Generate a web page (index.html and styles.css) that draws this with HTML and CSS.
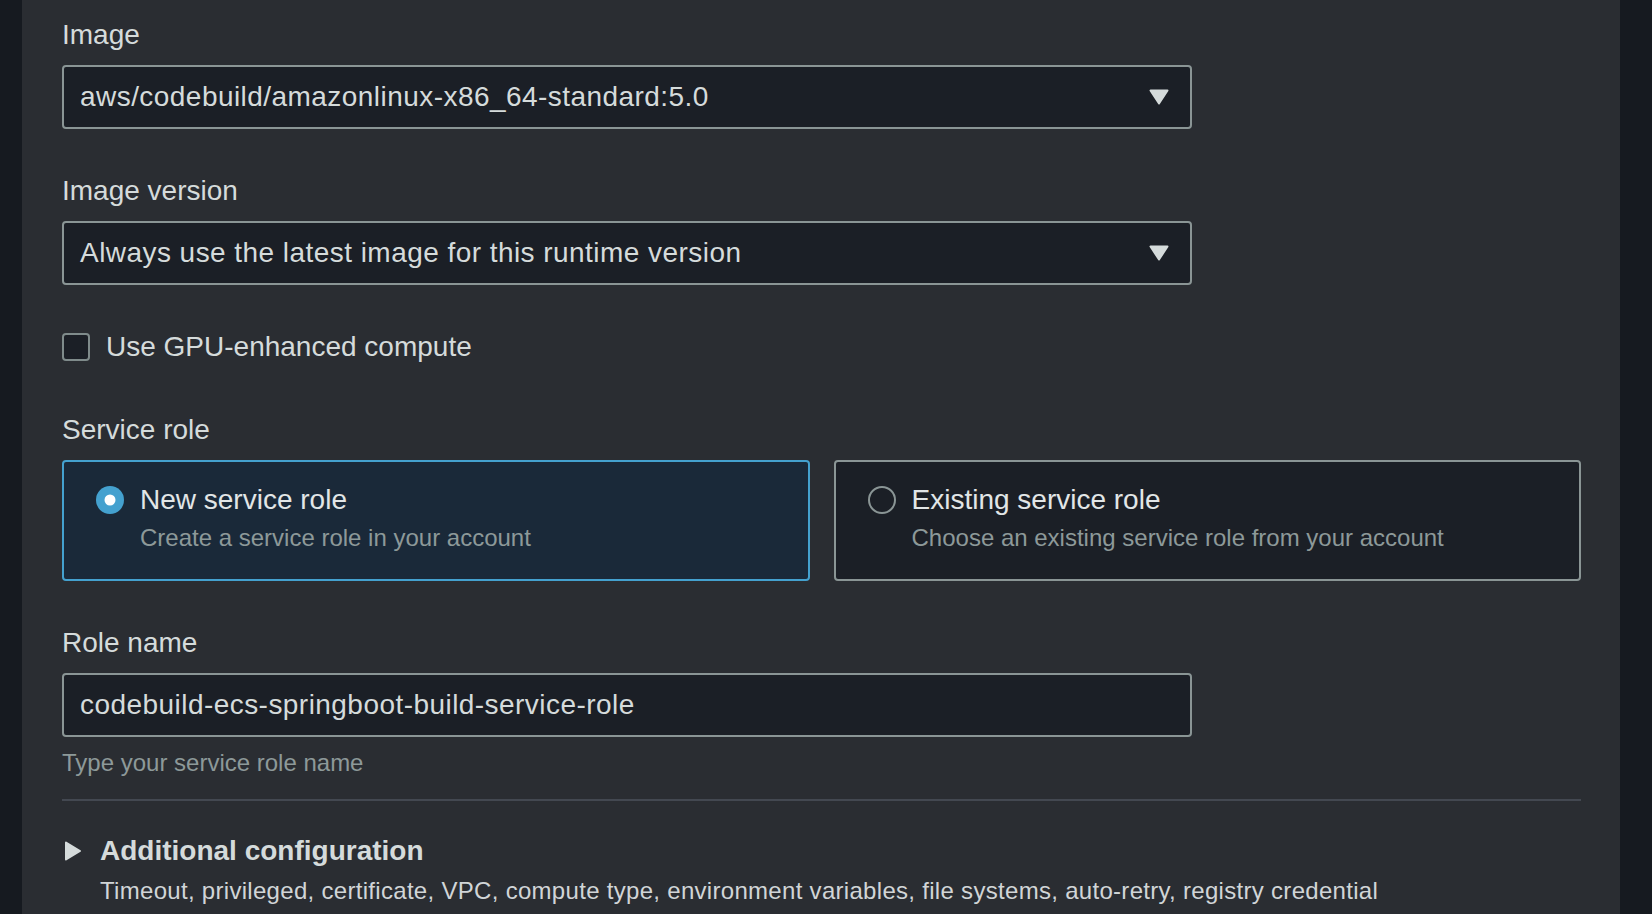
FILE: index.html
```html
<!DOCTYPE html>
<html lang="en">
<head>
<meta charset="utf-8">
<title>Environment</title>
<link rel="stylesheet" href="styles.css">
</head>
<body>
<div class="page">
  <div class="rail rail-left"></div>
  <main class="panel">
    <div class="field">
      <div class="label">Image</div>
      <div class="select">
        <span class="value">aws/codebuild/amazonlinux-x86_64-standard:5.0</span>
        <svg class="caret" width="20" height="16" viewBox="0 0 20 16"><path d="M1.5 1.5 H18.5 L10 14.5 Z" fill="#d5dbdb" stroke="#d5dbdb" stroke-width="2" stroke-linejoin="round"/></svg>
      </div>
    </div>
    <div class="field">
      <div class="label">Image version</div>
      <div class="select">
        <span class="value">Always use the latest image for this runtime version</span>
        <svg class="caret" width="20" height="16" viewBox="0 0 20 16"><path d="M1.5 1.5 H18.5 L10 14.5 Z" fill="#d5dbdb" stroke="#d5dbdb" stroke-width="2" stroke-linejoin="round"/></svg>
      </div>
    </div>
    <div class="check-row">
      <span class="checkbox"></span>
      <span class="check-label">Use GPU-enhanced compute</span>
    </div>
    <div class="field field-roles">
      <div class="label">Service role</div>
      <div class="tiles">
        <div class="tile tile-selected">
          <svg class="radio" width="28" height="28" viewBox="0 0 28 28"><circle cx="14" cy="14" r="14" fill="#44a1cf"/><circle cx="14" cy="14" r="5.5" fill="#ffffff"/></svg>
          <div class="tile-text">
            <div class="tile-title">New service role</div>
            <div class="tile-desc">Create a service role in your account</div>
          </div>
        </div>
        <div class="tile">
          <svg class="radio" width="28" height="28" viewBox="0 0 28 28"><circle cx="14" cy="14" r="13" fill="none" stroke="#8a9595" stroke-width="2"/></svg>
          <div class="tile-text">
            <div class="tile-title">Existing service role</div>
            <div class="tile-desc">Choose an existing service role from your account</div>
          </div>
        </div>
      </div>
    </div>
    <div class="field">
      <div class="label">Role name</div>
      <div class="input"><span class="value">codebuild-ecs-springboot-build-service-role</span></div>
      <div class="help">Type your service role name</div>
    </div>
    <div class="divider"></div>
    <div class="expander">
      <div class="expander-head">
        <svg class="expander-icon" width="18" height="20" viewBox="0 0 18 20"><path d="M2 1.5 L16 10 L2 18.5 Z" fill="#d5dbdb" stroke="#d5dbdb" stroke-width="2" stroke-linejoin="round"/></svg>
        <span class="expander-title">Additional configuration</span>
      </div>
      <div class="expander-desc">Timeout, privileged, certificate, VPC, compute type, environment variables, file systems, auto-retry, registry credential</div>
    </div>
  </main>
  <div class="rail rail-right"></div>
</div>
</body>
</html>
```

FILE: styles.css
```css
html, body {
  margin: 0;
  padding: 0;
  height: 100%;
  background: #16191f;
  overflow: hidden;
}

body {
  font-family: "Liberation Sans", Arial, sans-serif;
  color: #d5dbdb;
}

.page {
  display: flex;
  height: 914px;
}

.rail-left {
  width: 22px;
  background: #161a20;
  flex: none;
}

.rail-right {
  width: 32px;
  background: #161a20;
  flex: none;
}

.panel {
  flex: 1;
  background: #2a2d32;
  padding: 13px 39px 0 40px;
  display: flex;
  flex-direction: column;
}

.field + .field,
.field + .check-row {
  margin-top: 40px;
}

.check-row + .field {
  margin-top: 39px;
}

.label {
  font-size: 28px;
  line-height: 44px;
  color: #d5dbdb;
  margin-bottom: 8px;
}

.select,
.input {
  width: 1130px;
  box-sizing: border-box;
  height: 64px;
  border: 2px solid #8a9595;
  border-radius: 4px;
  background: #1b1f26;
  display: flex;
  align-items: center;
  justify-content: space-between;
  padding: 0 21px 0 16px;
  font-size: 28px;
  line-height: 44px;
  color: #d5dbdb;
}

.value {
  letter-spacing: 0.45px;
}

.caret {
  display: block;
  flex: none;
}

.check-row {
  display: flex;
  align-items: center;
  gap: 16px;
  height: 44px;
}

.checkbox {
  width: 28px;
  height: 28px;
  box-sizing: border-box;
  border: 2px solid #7f8b8b;
  border-radius: 4px;
  background: #1b1f26;
  flex: none;
}

.check-label {
  font-size: 28px;
  line-height: 44px;
}

.tiles {
  display: grid;
  grid-template-columns: 1fr 1fr;
  gap: 24px;
}

.tile {
  display: flex;
  align-items: flex-start;
  gap: 16px;
  padding: 16px 32px 25px 32px;
  border: 2px solid #8a9595;
  border-radius: 4px;
  background: #1b1f26;
}

.tile-selected {
  background: #1a2939;
  border-color: #44a1cf;
}

.radio {
  display: block;
  flex: none;
  margin-top: 8px;
}

.tile-title {
  font-size: 28px;
  line-height: 44px;
  color: #e2e6e7;
}

.tile-desc {
  font-size: 24px;
  line-height: 32px;
  color: #8d9999;
}

.help {
  margin-top: 10px;
  font-size: 24px;
  line-height: 32px;
  color: #8d9999;
}

.divider {
  margin-top: 20px;
  height: 2px;
  background: #434851;
}

.expander {
  margin-top: 28px;
}

.expander-head {
  display: flex;
  align-items: center;
  gap: 18px;
  padding-left: 2px;
}

.expander-icon {
  display: block;
  flex: none;
}

.expander-title {
  font-size: 28px;
  line-height: 44px;
  font-weight: bold;
  color: #d5dbdb;
}

.expander-desc {
  margin-top: 2px;
  padding-left: 38px;
  font-size: 24px;
  line-height: 32px;
  letter-spacing: 0.3px;
  color: #d1d5d7;
}
```
